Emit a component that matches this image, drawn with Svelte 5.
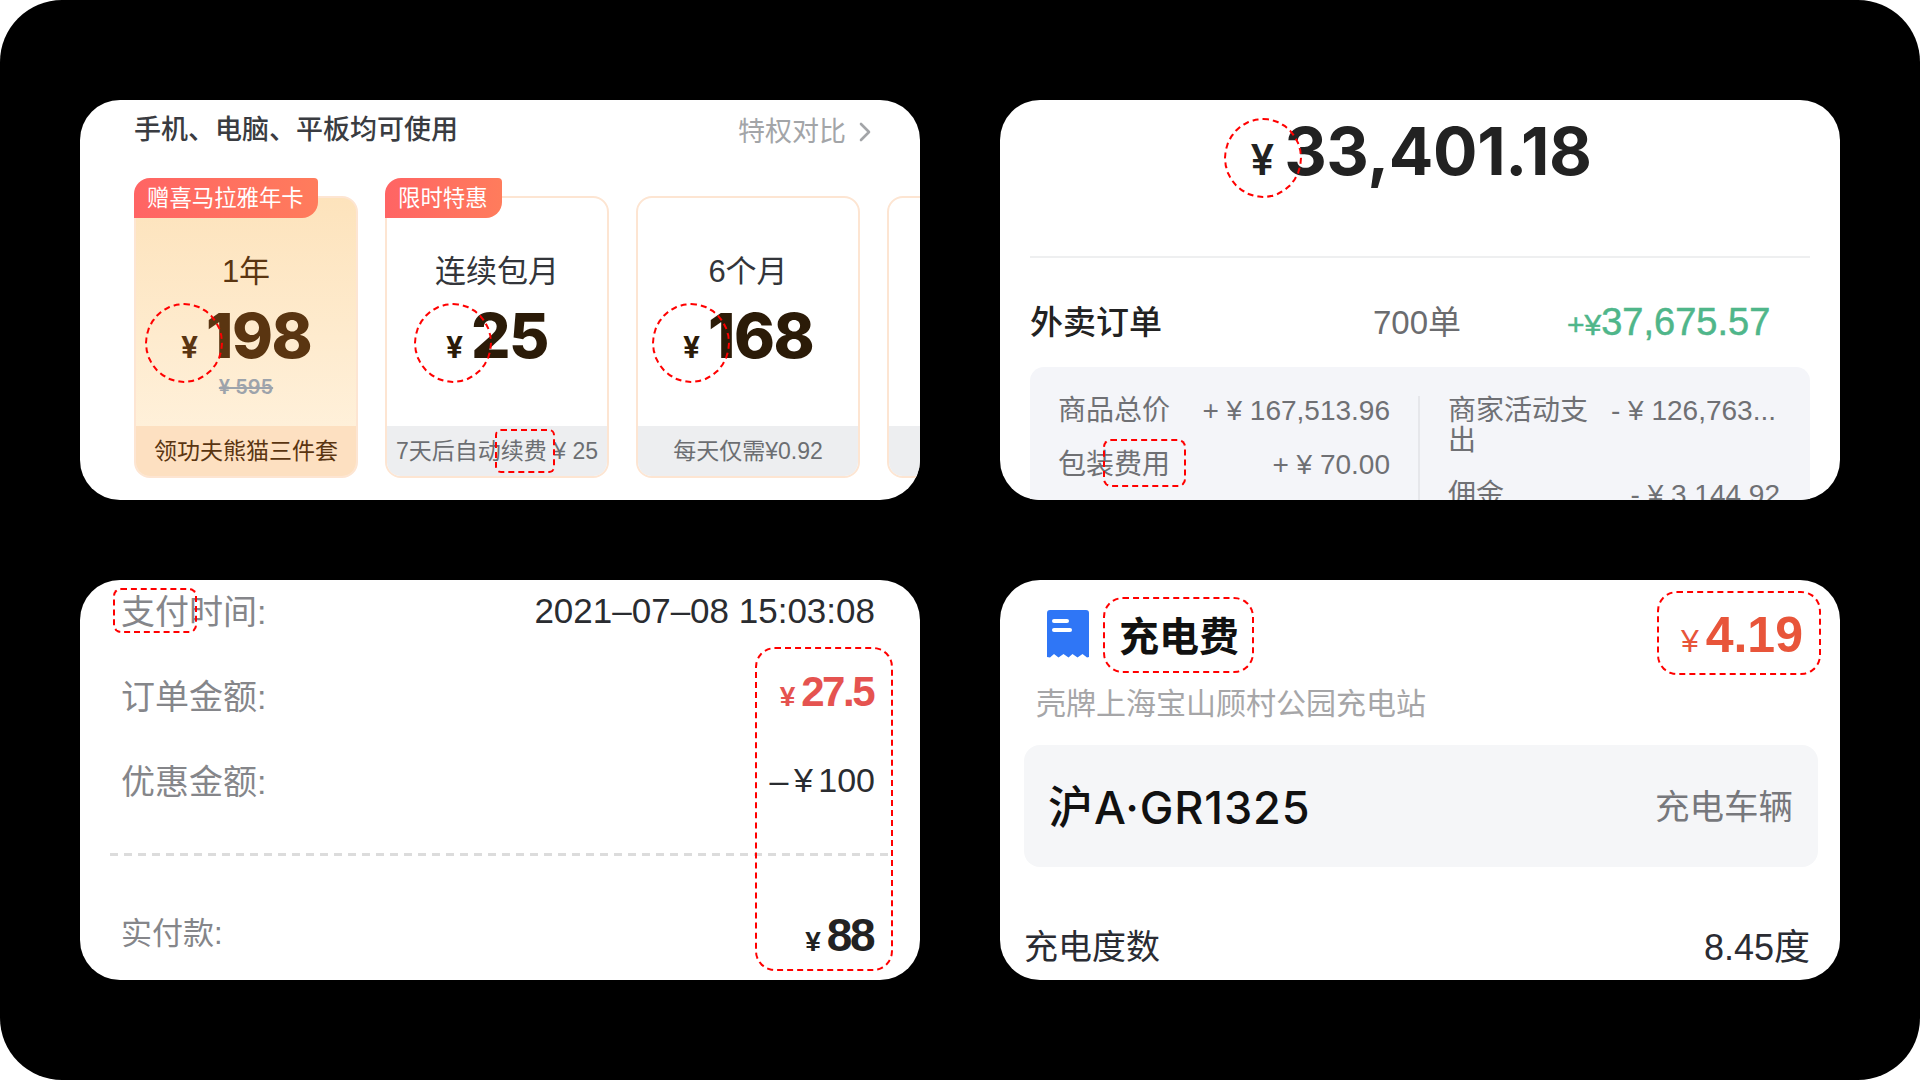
<script>
  const plans = [
    { term: '1年', price: '198', old: '¥ 595', foot: '领功夫熊猫三件套', tag: '赠喜马拉雅年卡', hot: true },
    { term: '连续包月', price: '25', foot: '7天后自动续费 ¥ 25', tag: '限时特惠' },
    { term: '6个月', price: '168', foot: '每天仅需¥0.92' },
    { term: '', price: '', foot: '' }
  ];
</script>

<main class="page">
  <section class="card vip">
    <div class="vip-head">
      <span class="vip-title">手机、电脑、平板均可使用</span>
      <span class="vip-link">特权对比
        <svg width="12" height="20" viewBox="0 0 12 20"><path d="M2 2l8 8-8 8" fill="none" stroke="#a3a5a8" stroke-width="2.6" stroke-linecap="round" stroke-linejoin="round"/></svg>
      </span>
    </div>
    <div class="plans">
      {#each plans as p}
        <div class="plan" class:hot={p.hot}>
          {#if p.tag}<span class="tag">{p.tag}</span>{/if}
          <div class="plan-body">
            <div class="term">{p.term}</div>
            {#if p.price}
              <div class="price"><span class="yen">¥</span><b>{p.price}</b></div>
            {/if}
            {#if p.old}<div class="old">{p.old}</div>{/if}
          </div>
          <div class="plan-foot">{p.foot}</div>
        </div>
      {/each}
    </div>
    <i class="mark round m1"></i>
    <i class="mark round m2"></i>
    <i class="mark round m3"></i>
    <i class="mark m4"></i>
  </section>

  <section class="card income">
    <div class="total"><span class="yen">¥</span><b>33,401.18</b></div>
    <div class="order">
      <span class="order-name">外卖订单</span>
      <span class="order-count">700单</span>
      <span class="order-sum"><small>+¥</small>37,675.57</span>
    </div>
    <div class="detail">
      <div class="detail-col left">
        <div class="line"><span>商品总价</span><span>+ ¥ 167,513.96</span></div>
        <div class="line"><span>包装费用</span><span>+ ¥ 70.00</span></div>
      </div>
      <div class="detail-col right">
        <div class="line"><span class="wrap">商家活动支出</span><span class="clipped">- ¥ 126,763...</span></div>
        <div class="line"><span>佣金</span><span>- ¥ 3,144.92</span></div>
      </div>
    </div>
    <i class="mark round m5"></i>
    <i class="mark m6"></i>
  </section>

  <section class="card pay">
    <div class="pay-row first"><span class="pay-label">支付时间:</span><span class="pay-value">2021–07–08 15:03:08</span></div>
    <div class="pay-row amount"><span class="pay-label">订单金额:</span><span class="red"><small>¥</small>27.5</span></div>
    <div class="pay-row discount"><span class="pay-label">优惠金额:</span><span class="pay-value">– ¥ 100</span></div>
    <div class="dash"></div>
    <div class="pay-row paid"><span class="pay-label">实付款:</span><span class="big"><small>¥</small>88</span></div>
    <i class="mark m7"></i>
    <i class="mark m8"></i>
  </section>

  <section class="card charge">
    <div class="charge-head">
      <div class="charge-title">
        <svg width="42" height="48" viewBox="0 0 42 48">
          <path d="M3 0h36a3 3 0 0 1 3 3v44l-2 .5-4.500-3.500-5 3.500-5-3.500-4 3.500-5-3.500-5 3.500-4.500-3.500L3 47.500 0 47V3a3 3 0 0 1 3-3z" fill="#2f76f6"/>
          <rect x="5" y="9" width="17" height="4" rx="2" fill="#fff"/>
          <rect x="5" y="18" width="20" height="4" rx="2" fill="#fff"/>
        </svg>
        <span>充电费</span>
      </div>
      <span class="charge-fee"><small>¥</small>4.19</span>
    </div>
    <div class="charge-place">壳牌上海宝山顾村公园充电站</div>
    <div class="plate"><b>沪A·GR1325</b><span>充电车辆</span></div>
    <div class="kwh"><span>充电度数</span><span class="kwh-value">8.45度</span></div>
    <i class="mark m9"></i>
    <i class="mark m10"></i>
  </section>
</main>

<style>
  :global(body) {
    margin: 0;
    background: #fff;
  }
  .page {
    width: 1920px;
    height: 1080px;
    box-sizing: border-box;
    padding: 100px 80px;
    display: grid;
    grid-template-columns: 840px 840px;
    grid-template-rows: 400px 400px;
    gap: 80px;
    background: #000;
    border-radius: 62px;
    font-family: "Liberation Sans", "Noto Sans CJK SC", sans-serif;
    overflow: hidden;
  }
  .card {
    position: relative;
    background: #fff;
    border-radius: 40px;
    overflow: hidden;
    box-sizing: border-box;
  }
  .mark {
    position: absolute;
    border: 2px dashed #f00;
    border-radius: 14px;
    box-sizing: border-box;
  }
  .mark.round { border-radius: 50%; }
  small { font-size: inherit; }

  /* vip */
  .vip { padding: 12px 0 0 54px; }
  .vip-head {
    display: flex;
    justify-content: space-between;
    padding-right: 49px;
    height: 46px;
  }
  .vip-title { font-size: 27px; color: #3a3c41; line-height: 36px; font-weight: 500; }
  .vip-link { font-size: 27px; color: #a3a5a8; line-height: 40px; display: flex; align-items: center; gap: 13px; height: 40px; }
  .plans {
    display: flex;
    gap: 27px;
    margin-top: 38px;
  }
  .plan {
    position: relative;
    flex: 0 0 224px;
    width: 224px;
    height: 282px;
    box-sizing: border-box;
    border: 2px solid #fde5d2;
    border-radius: 16px;
    display: flex;
    flex-direction: column;
    overflow: visible;
    color: #2b1b08;
  }
  .plan.hot {
    background: linear-gradient(180deg, #fde3bc 0%, #fff3e0 100%);
    color: #5a3511;
  }
  .tag {
    position: absolute;
    left: -2px;
    top: -20px;
    height: 40px;
    line-height: 41px;
    padding: 0 14px 0 13px;
    font-size: 22.4px;
    color: #fff;
    white-space: nowrap;
    background: linear-gradient(90deg, #ff6464, #ff7c5c);
    border-radius: 16px 4px 16px 0;
  }
  .plan-body { flex: 1; display: flex; flex-direction: column; align-items: center; padding-top: 54px; }
  .term { font-size: 31px; line-height: 40px; color: #33353a; }
  .hot .term { color: #5a3511; }
  .price { display: flex; align-items: baseline; height: 66px; margin-top: 11px; font-family: Inter, sans-serif; }
  .price .yen { font-size: 30px; font-weight: 700; margin-right: 8px; }
  .price b { font-size: 62px; line-height: 66px; font-weight: 800; letter-spacing: -1.5px; }
  .old { font-size: 20px; line-height: 24px; color: #9da3ab; text-decoration: line-through; font-weight: 600; font-family: Inter, sans-serif; margin-top: 6px; }
  .plan-foot {
    height: 50px;
    line-height: 50px;
    background: #edeef0;
    color: #6c6e72;
    font-size: 23px;
    text-align: center;
    white-space: nowrap;
    border-radius: 0 0 14px 14px;
    overflow: hidden;
  }
  .hot .plan-foot { background: #fde0c1; color: #5a3511; }
  .m1 { left: 65px; top: 203px; width: 78px; height: 80px; }
  .m2 { left: 334px; top: 203px; width: 78px; height: 80px; }
  .m3 { left: 572px; top: 203px; width: 78px; height: 80px; }
  .m4 { left: 415px; top: 329px; width: 60px; height: 44px; border-radius: 6px; }

  /* income */
  .income { padding: 0 30px; }
  .total {
    display: flex;
    justify-content: center;
    align-items: baseline;
    height: 158px;
    box-sizing: border-box;
    padding: 6px 0 0 2px;
    border-bottom: 2px solid #eeeff0;
    font-family: Inter, sans-serif;
    color: #222;
  }
  .total .yen { font-size: 42px; font-weight: 600; margin-right: 10px; }
  .total b { font-size: 66px; font-weight: 700; line-height: 90px; letter-spacing: -.4px; }
  .order {
    display: grid;
    grid-template-columns: 343px 194px 1fr;
    align-items: center;
    height: 109px;
    box-sizing: border-box;
    padding-top: 14px;
  }
  .order-name { font-size: 33px; color: #222; font-weight: 500; }
  .order-count { font-size: 33px; color: #6b6c6f; }
  .order-sum { font-size: 38px; color: #4fb68a; -webkit-text-stroke: .5px #4fb68a; margin-top: 6px; }
  .order-sum small { font-size: 30px; }
  .detail {
    display: grid;
    grid-template-columns: 362px 1fr;
    background: #f4f5f9;
    border-radius: 14px;
    padding: 29px 0 0 28px;
    height: 140px;
    font-size: 28px;
    color: #6f7074;
  }
  .detail-col { display: flex; flex-direction: column; gap: 24px; }
  .left { padding-right: 28px; border-right: 2px solid #e6e7eb; }
  .right { padding: 0 30px 0 28px; }
  .line { display: flex; justify-content: space-between; gap: 16px; line-height: 30px; white-space: nowrap; }
  .wrap { width: 144px; white-space: normal; }
  .clipped { margin-right: 4px; }
  .m5 { left: 224px; top: 18px; width: 78px; height: 80px; }
  .m6 { left: 103px; top: 339px; width: 83px; height: 48px; border-radius: 8px; }

  /* pay */
  .pay { padding: 0 45px 0 41px; }
  .pay-row { display: flex; justify-content: space-between; align-items: center; }
  .pay-label { font-size: 34px; color: #85868a; }
  .pay-value { font-size: 35px; color: #2a2c30; }
  .first { height: 62px; }
  .first .pay-label { margin-top: -4px; }
  .amount { height: 84px; margin-top: 10px; }
  .discount { height: 56px; margin-top: 14px; padding-top: 1px; }
  .discount .pay-value { font-size: 34px; padding-top: 2px; word-spacing: -4px; }
  .red { font-size: 42px; font-weight: 700; color: #e55350; letter-spacing: -2.5px; margin: -5px 2px 0 0; }
  .red small, .big small { font-size: 28px; margin-right: 6px; font-weight: 700; letter-spacing: 0; }
  .dash {
    margin: 46px -15px 0 -11px;
    height: 3px;
    background: repeating-linear-gradient(90deg, #dcdcdc 0 8px, transparent 8px 14px);
  }
  .paid { height: 76px; margin-top: 36px; }
  .paid .pay-label { font-size: 31px; }
  .big { font-size: 46px; font-weight: 700; color: #222; letter-spacing: -2.5px; margin: 10px 2px 0 0; }
  .m7 { left: 33px; top: 8px; width: 84px; height: 45px; border-radius: 8px; }
  .m8 { left: 675px; top: 67px; width: 138px; height: 324px; border-radius: 20px; }

  /* charge */
  .charge { padding: 0 22px 0 24px; }
  .charge-head { display: flex; justify-content: space-between; align-items: center; padding: 24px 15px 0 23px; height: 60px; }
  .charge-title { display: flex; align-items: center; gap: 30px; }
  .charge-title span { font-size: 40px; font-weight: 700; color: #111; }
  .charge-fee { font-size: 50px; font-weight: 700; color: #e8553a; margin-top: 2px; }
  .charge-fee small { font-size: 32px; font-weight: 400; margin-right: 7px; }
  .charge-place { font-size: 30px; color: #a6a6a8; margin: 15px 0 0 12px; }
  .plate {
    display: flex;
    justify-content: space-between;
    align-items: center;
    height: 122px;
    margin-top: 22px;
    padding: 0 25px 4px 24px;
    box-sizing: border-box;
    background: #f5f6f8;
    border-radius: 16px;
  }
  .plate b { font-size: 45px; font-weight: 500; color: #111; letter-spacing: .9px; font-family: Inter, "Noto Sans CJK SC", sans-serif; }
  .plate span { font-size: 34.5px; color: #77787c; }
  .kwh { display: flex; justify-content: space-between; align-items: center; margin-top: 51px; padding-right: 8px; font-size: 34px; color: #2a2c33; }
  .kwh-value { font-size: 36px; }
  .m9 { left: 103px; top: 17px; width: 151px; height: 76px; border-radius: 20px; }
  .m10 { left: 657px; top: 11px; width: 164px; height: 84px; border-radius: 20px; }
</style>
